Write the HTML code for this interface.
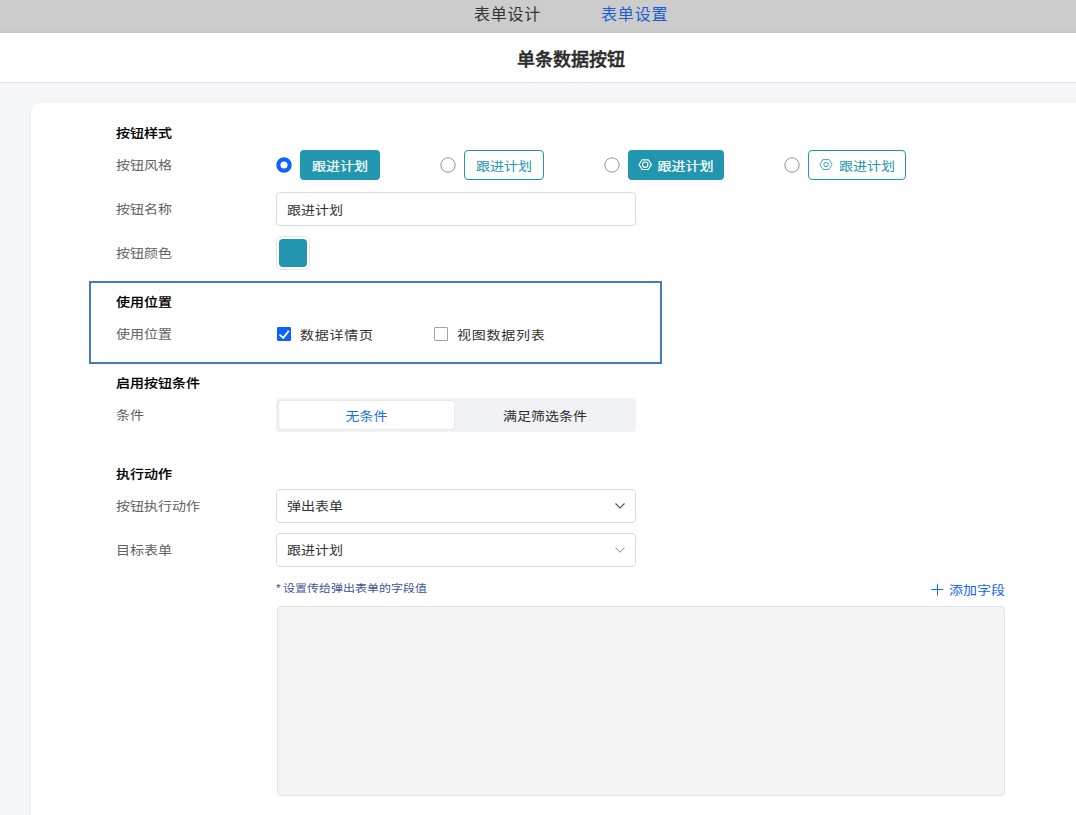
<!DOCTYPE html>
<html lang="zh-CN">
<head>
<meta charset="utf-8">
<title>单条数据按钮</title>
<style>
*{box-sizing:border-box;margin:0;padding:0}
html,body{width:1076px;height:815px;overflow:hidden;background:#f5f7fa}
body{font-family:"Liberation Sans","Noto Sans CJK SC",sans-serif;font-size:14px;color:#333;position:relative}
.abs{position:absolute}
.t{display:inline-block;transform:translateY(.5px) scaleY(.88);transform-origin:50% 50%}
.sec,.lab,.txt,.hint,.add{transform:translateY(.5px) scaleY(.88);transform-origin:50% 50%}
.topbar{left:0;top:0;width:1142px;height:33px;background:linear-gradient(to bottom,#cccccc 0,#cccccc 27px,#c8c8c8 31px,#c3c3c3 33px)}
.tab{top:0;height:28px;line-height:29px;font-size:16px;color:#333;white-space:nowrap;letter-spacing:.75px}
.tab.on{color:#1a5fd0}
.header{left:0;top:33px;width:1142px;height:50px;background:#fff;border-bottom:1px solid #e1e1e1}
.title{left:0;top:33px;width:1142px;height:50px;line-height:54px;text-align:center;font-size:18px;font-weight:500;-webkit-text-stroke:.45px #2b2b2b;color:#2b2b2b}
.card{left:31px;top:103px;width:1080px;height:800px;background:#fff;border-radius:10px;box-shadow:0 0 8px rgba(0,0,0,.035)}
.sec{left:116px;height:20px;line-height:20px;font-weight:500;-webkit-text-stroke:.15px #000;color:#000;font-size:14px;white-space:nowrap}
.lab{left:116px;height:20px;line-height:20px;color:#606266;font-size:14px;white-space:nowrap}
.radio{width:14px;height:14px;border-radius:50%;border:1px solid #8c8c8c;background:#fff}
.radio.on{border:4px solid #1664ff}
.btn{height:30px;line-height:32px;border-radius:4px;font-size:14px;white-space:nowrap;text-align:center}
.btn.fill{background:#2196ae;color:#fff;-webkit-text-stroke:.25px #fff}
.btn.line{background:#fff;color:#2196ae;border:1px solid #2196ae;line-height:30px}
.ico{display:inline-block;width:12px;height:12px;vertical-align:-0.5px;margin-right:7px}
.input{left:276px;width:360px;height:34px;border:1px solid #dcdcdc;border-radius:4px;background:#fff;line-height:34px;padding-left:10px;color:#333;font-size:14px}
.swatch{left:276px;top:236px;width:34px;height:34px;border:1px solid #e6e6e6;border-radius:5px;background:#fff}
.swatch i{position:absolute;left:2px;top:2px;width:28px;height:28px;border-radius:4px;background:#2196ae}
.hl{left:89px;top:281px;width:573px;height:83px;border:2px solid #427cbc}
.cb{width:14px;height:14px;border:1px solid #a2a2aa;border-radius:1px;background:#fff}
.cb.on{background:#0f62ff;border-color:#0f62ff}
.txt{height:20px;line-height:20px;font-size:14px;color:#333;white-space:nowrap;letter-spacing:.75px}
.seg{left:276px;top:398px;width:360px;height:34px;background:#f0f2f5;border-radius:4px}
.segon{left:278px;top:400px;width:177px;height:30px;background:#fff;border-radius:4px;border:1px solid #e6e8ec;line-height:30px;text-align:center;color:#1a6fe8}
.segoff{left:455px;top:400px;width:180px;height:30px;line-height:32px;text-align:center;color:#2a2a2a}
.hint{left:276px;top:579px;height:18px;line-height:18px;font-size:12px;color:#43539c;white-space:nowrap;word-spacing:-1px}
.add{right:71px;top:580px;height:20px;line-height:20px;font-size:14px;color:#1366ff;white-space:nowrap}
.box{left:277px;top:606px;width:728px;height:190px;background:#f4f4f4;border:1px solid #e2e2e2;border-radius:4px}
</style>
</head>
<body>
<div class="abs topbar"></div>
<div class="abs tab" style="left:474px">表单设计</div>
<div class="abs tab on" style="left:601px;letter-spacing:.85px">表单设置</div>
<div class="abs header"></div>
<div class="abs title">单条数据按钮</div>
<div class="abs card"></div>

<div class="abs sec" style="top:123px">按钮样式</div>
<div class="abs lab" style="top:155px">按钮风格</div>
<svg class="abs" style="left:275px;top:156px" width="18" height="18" viewBox="0 0 18 18"><circle cx="9" cy="9" r="5.65" fill="#fff" stroke="#0f62ff" stroke-width="4.2"/></svg>
<div class="abs btn fill" style="left:300px;top:150px;width:80px"><span class="t">跟进计划</span></div>
<svg class="abs" style="left:439px;top:156px" width="18" height="18" viewBox="0 0 18 18"><circle cx="9" cy="9" r="7.2" fill="#fff" stroke="#969696" stroke-width="1"/></svg>
<div class="abs btn line" style="left:464px;top:150px;width:80px"><span class="t">跟进计划</span></div>
<svg class="abs" style="left:603px;top:156px" width="18" height="18" viewBox="0 0 18 18"><circle cx="9" cy="9" r="7.2" fill="#fff" stroke="#969696" stroke-width="1"/></svg>
<div class="abs btn fill" style="left:628px;top:150px;width:96px;text-align:left;padding-left:29.5px"><svg class="abs" style="left:10px;top:9px" width="15" height="12" viewBox="0 0 15 12"><path d="M1.1 5.65L4.05.8h6.3l2.95 4.85-2.95 4.85h-6.3z" fill="none" stroke="#fff" stroke-width="1.15" stroke-linejoin="round"/><circle cx="7.2" cy="5.65" r="2.65" fill="none" stroke="#fff" stroke-width="1.15"/></svg><span class="t">跟进计划</span></div>
<svg class="abs" style="left:783px;top:156px" width="18" height="18" viewBox="0 0 18 18"><circle cx="9" cy="9" r="7.2" fill="#fff" stroke="#969696" stroke-width="1"/></svg>
<div class="abs btn line" style="left:808px;top:150px;width:98px;text-align:left;padding-left:30.1px"><svg class="abs" style="left:10px;top:8px" width="15" height="12" viewBox="0 0 15 12"><path d="M.95 5.5L3.9.6h6.2l2.95 4.9-2.95 4.9H3.9z" fill="none" stroke="#2196ae" stroke-width=".85" stroke-linejoin="round"/><circle cx="7.1" cy="5.5" r="2.25" fill="none" stroke="#2196ae" stroke-width=".9"/></svg><span class="t">跟进计划</span></div>

<div class="abs lab" style="top:199px">按钮名称</div>
<div class="abs input" style="top:192px"><span class="t">跟进计划</span></div>

<div class="abs lab" style="top:243px">按钮颜色</div>
<div class="abs swatch"><i></i></div>

<div class="abs hl"></div>
<div class="abs sec" style="top:292px">使用位置</div>
<div class="abs lab" style="top:324px">使用位置</div>
<div class="abs cb on" style="left:277px;top:327px"><svg width="12" height="12" viewBox="0 0 12 12" style="display:block"><path d="M1.5 6.6l3.8 3.3 5.5-7.2" fill="none" stroke="#fff" stroke-width="1.8"/></svg></div>
<div class="abs txt" style="left:300px;top:325px">数据详情页</div>
<div class="abs cb" style="left:434px;top:327px"></div>
<div class="abs txt" style="left:457px;top:325px">视图数据列表</div>

<div class="abs sec" style="top:373px">启用按钮条件</div>
<div class="abs lab" style="top:405px">条件</div>
<div class="abs seg"></div>
<div class="abs segon"><span class="t">无条件</span></div>
<div class="abs segoff"><span class="t">满足筛选条件</span></div>

<div class="abs sec" style="top:464px">执行动作</div>
<div class="abs lab" style="top:496px">按钮执行动作</div>
<div class="abs input" style="top:489px;line-height:33px"><span class="t">弹出表单</span></div>
<svg class="abs" style="left:614px;top:501px" width="12" height="10" viewBox="0 0 12 10"><path d="M1.5 2.5L6 7l4.5-4.5" fill="none" stroke="#555" stroke-width="1.15"/></svg>
<div class="abs lab" style="top:540px">目标表单</div>
<div class="abs input" style="top:533px;line-height:33px"><span class="t">跟进计划</span></div>
<svg class="abs" style="left:614px;top:545px" width="12" height="10" viewBox="0 0 12 10"><path d="M1.5 2.5L6 7l4.5-4.5" fill="none" stroke="#999" stroke-width="1.05"/></svg>

<div class="abs hint">* 设置传给弹出表单的字段值</div>
<svg class="abs" style="left:931px;top:583px" width="13" height="13" viewBox="0 0 13 13"><path d="M6.5 .8v11.9M.2 6.5h12" stroke="#1a6aff" stroke-width="1"/></svg>
<div class="abs add">添加字段</div>
<div class="abs box"></div>
</body>
</html>
